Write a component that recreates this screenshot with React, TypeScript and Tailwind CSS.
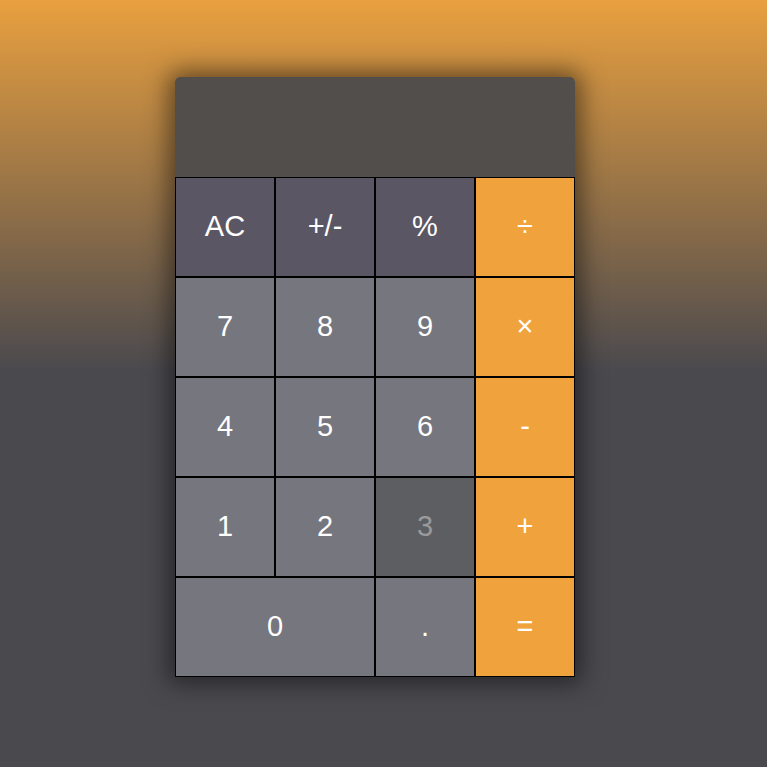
import React from 'react';

type Key = {
  label: string;
  kind: 'fn' | 'num' | 'op';
  wide?: boolean;
  dim?: boolean;
};

const keys: Key[] = [
  { label: 'AC', kind: 'fn' },
  { label: '+/-', kind: 'fn' },
  { label: '%', kind: 'fn' },
  { label: '÷', kind: 'op' },
  { label: '7', kind: 'num' },
  { label: '8', kind: 'num' },
  { label: '9', kind: 'num' },
  { label: '×', kind: 'op' },
  { label: '4', kind: 'num' },
  { label: '5', kind: 'num' },
  { label: '6', kind: 'num' },
  { label: '-', kind: 'op' },
  { label: '1', kind: 'num' },
  { label: '2', kind: 'num' },
  { label: '3', kind: 'num', dim: true },
  { label: '+', kind: 'op' },
  { label: '0', kind: 'num', wide: true },
  { label: '.', kind: 'num' },
  { label: '=', kind: 'op' },
];

const kindColors: Record<Key['kind'], string> = {
  fn: 'bg-[#5a5664] text-white',
  num: 'bg-[#76767e] text-white',
  op: 'bg-[#f0a23c] text-white',
};

const App: React.FC = () => {
  return (
    <div
      className="min-h-screen w-full bg-[linear-gradient(to_bottom,#e9a03f_0%,#4a494e_48.5%,#4a494e_100%)] pl-[175px] pt-[77px]"
      style={{ fontFamily: '"Liberation Sans", Arial, sans-serif' }}
    >
      <div className="w-[400px] shadow-[0_0_24px_6px_rgba(0,0,0,0.5)] rounded-t-[5px]">
        {/* Display */}
        <div className="h-[100px] rounded-t-[5px] bg-[#524e4c]" />

        {/* Keypad */}
        <div className="grid grid-cols-4">
          {keys.map(k => (
            <button
              key={k.label}
              className={`h-[100px] border border-black pb-[2px] text-[29px] leading-none flex items-center justify-center ${
                k.wide ? 'col-span-2' : ''
              } ${k.dim ? 'bg-[#5d5e62] text-[#9a9a9c]' : kindColors[k.kind]}`}
            >
              {k.label}
            </button>
          ))}
        </div>
      </div>
    </div>
  );
};

export default App;
